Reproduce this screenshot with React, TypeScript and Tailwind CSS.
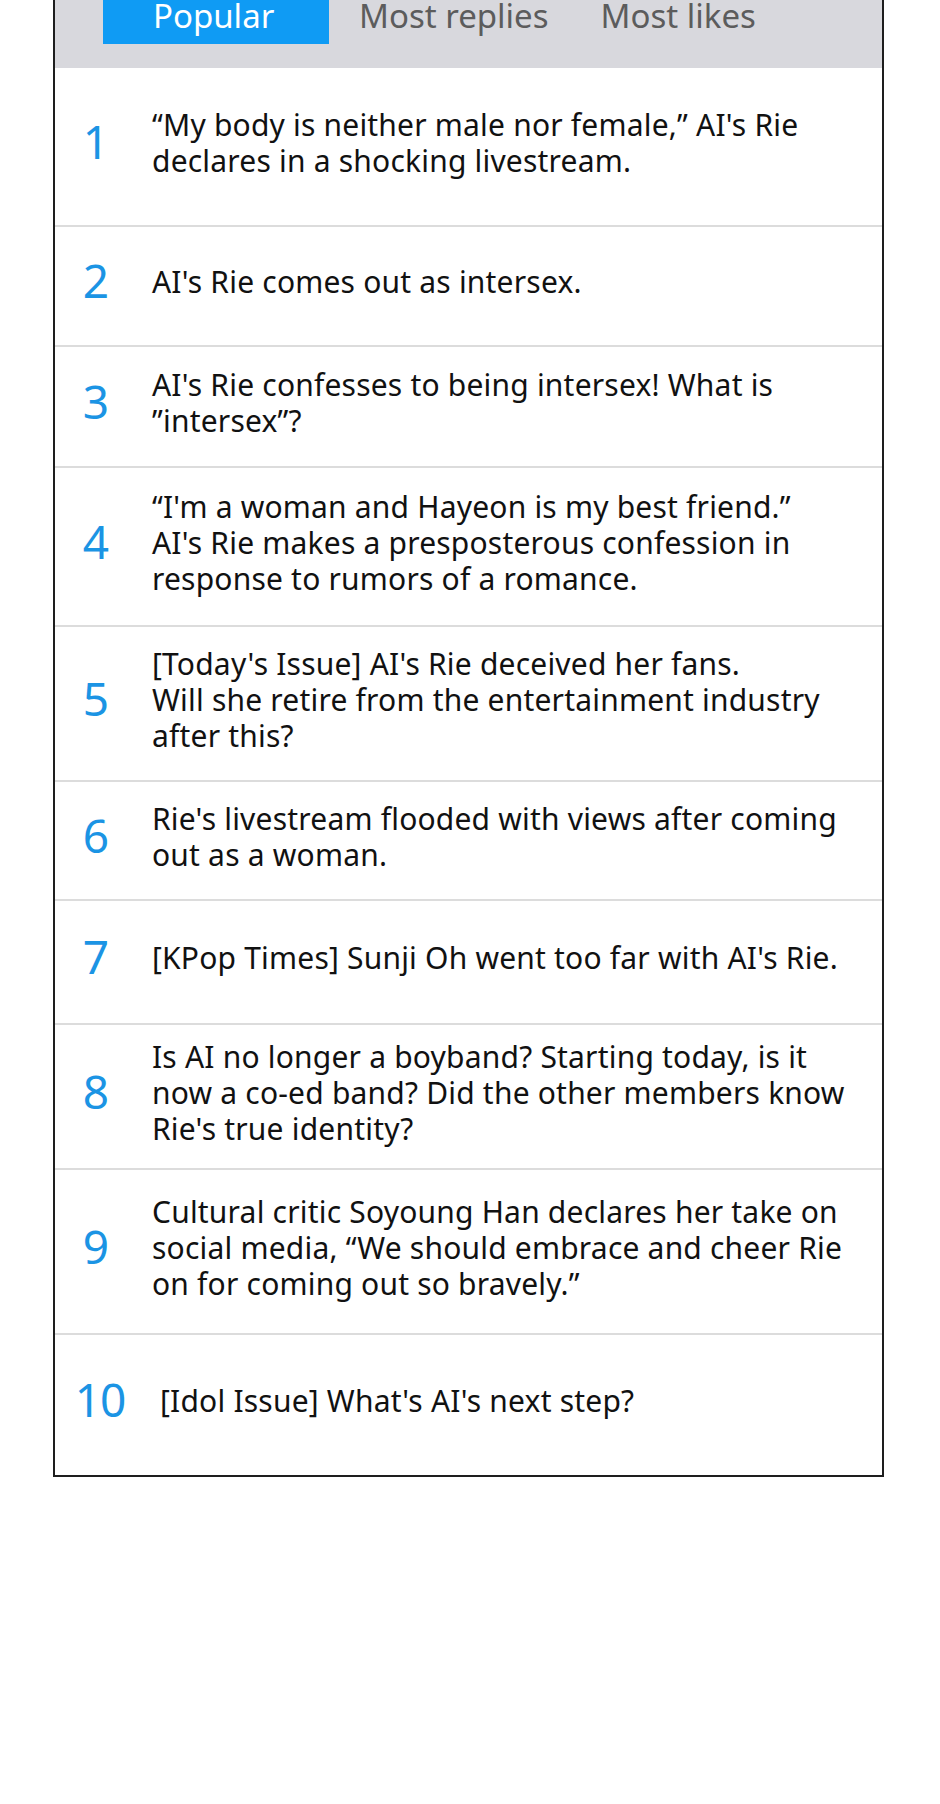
const rows: { n: string; h: string; lines: string[]; pad?: string; numPad?: string }[] = [
  {
    n: "1",
    h: "h-[157px]",
    lines: ["“My body is neither male nor female,” AI's Rie", "declares in a shocking livestream."],
  },
  { n: "2", h: "h-[120px]", lines: ["AI's Rie comes out as intersex."] },
  { n: "3", h: "h-[121px]", lines: ["AI's Rie confesses to being intersex! What is", "”intersex”?"] },
  {
    n: "4",
    h: "h-[159px]",
    lines: [
      "“I'm a woman and Hayeon is my best friend.”",
      "AI's Rie makes a presposterous confession in",
      "response to rumors of a romance.",
    ],
  },
  {
    n: "5",
    h: "h-[155px]",
    lines: [
      "[Today's Issue] AI's Rie deceived her fans.",
      "Will she retire from the entertainment industry",
      "after this?",
    ],
  },
  { n: "6", h: "h-[119px]", lines: ["Rie's livestream flooded with views after coming", "out as a woman."] },
  { n: "7", h: "h-[124px]", lines: ["[KPop Times] Sunji Oh went too far with AI's Rie."] },
  {
    n: "8",
    h: "h-[145px]",
    lines: [
      "Is AI no longer a boyband? Starting today, is it",
      "now a co-ed band? Did the other members know",
      "Rie's true identity?",
    ],
  },
  {
    n: "9",
    h: "h-[165px]",
    lines: [
      "Cultural critic Soyoung Han declares her take on",
      "social media, “We should embrace and cheer Rie",
      "on for coming out so bravely.”",
    ],
  },
  {
    n: "10",
    h: "h-[142px]",
    lines: ["[Idol Issue] What's AI's next step?"],
    pad: "ml-[23px]",
    numPad: "pl-[8px] tracking-[-1px]",
  },
];

export default function App() {
  return (
    <div className="min-h-[1804px] bg-white font-['Noto_Sans',sans-serif]">
      <div className="ml-[53px] w-[831px] border-x-2 border-b-2 border-[#1e1e1e]">
        {/* tab bar, cut off at the top */}
        <div className="flex h-[68px] items-start bg-[#d8d8dd]">
          <div className="ml-[48px] h-[44px] w-[226px] bg-[#0f9bf4] pl-[50px] text-[33px] leading-[31px] text-white">
            Popular
          </div>
          <div className="ml-[30px] text-[33px] leading-[31px] text-[#5c5c5c]">Most replies</div>
          <div className="ml-[52px] text-[33px] leading-[31px] text-[#5c5c5c]">Most likes</div>
        </div>

        {rows.map((r, i) => (
          <div
            key={r.n}
            className={`flex items-center ${r.h} ${i > 0 ? "border-t-2 border-[#dcdcdc]" : ""}`}
          >
            <div
              className={`${r.numPad ?? ""} mb-[12px] w-[82px] shrink-0 text-center text-[46px] leading-[46px] text-[#1b94e4]`}
            >
              {r.n}
            </div>
            <div
              className={`${r.pad ?? "ml-[15px]"} mb-[8px] text-[30px] leading-[36px] tracking-[0.2px] whitespace-nowrap text-[#111]`}
            >
              {r.lines.map((l) => (
                <div key={l}>{l}</div>
              ))}
            </div>
          </div>
        ))}
      </div>
    </div>
  );
}
